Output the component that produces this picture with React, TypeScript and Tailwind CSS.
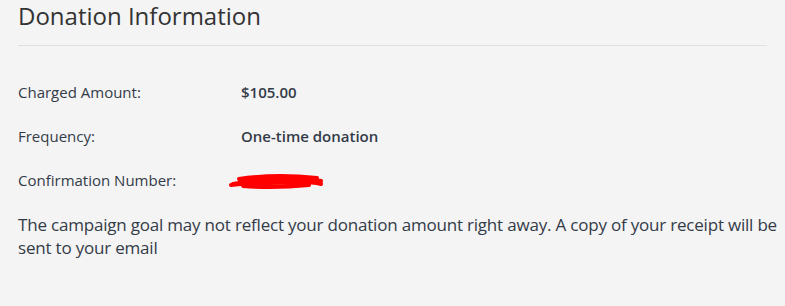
export default function App() {
  return (
    <div className="min-h-[306px] w-full bg-[#f4f4f4] pl-[18px] pr-[2px] font-['Open_Sans',sans-serif] text-[#333b48]">
      <h2 className="pt-[1px] text-[24px] leading-[30px] font-normal text-[#333]">Donation Information</h2>
      <div className="mt-[14px] h-px w-[749px] bg-[#e0e0e0]" />

      <div className="mt-[36px] flex flex-col gap-[24px] text-[15px] leading-[20px]">
        <div className="flex">
          <span className="w-[223px]">Charged Amount:</span>
          <span className="font-semibold">$105.00</span>
        </div>
        <div className="flex">
          <span className="w-[223px]">Frequency:</span>
          <span className="font-semibold">One-time donation</span>
        </div>
        <div className="flex h-[20px] items-center">
          <span className="w-[211px]">Confirmation Number:</span>
          <svg width="96" height="22" viewBox="0 0 96 22">
            <path
              d="M4 15 C20 11 40 10 60 9 C72 9 84 10 92 12 M2 16 C22 14 46 13 70 13 C80 13 88 14 92 15 M10 10 C30 7 60 6 88 9 M14 17 C40 19 60 18 80 16"
              stroke="#ff0000"
              strokeWidth="4"
              strokeLinecap="round"
              fill="none"
            />
            <path d="M20 11 C40 9 60 9 80 11 M26 14 C44 13 60 13 76 14" stroke="#ff0000" strokeWidth="5" fill="none" strokeLinecap="round" />
          </svg>
        </div>
      </div>

      <p className="mt-[23px] text-[17px] leading-[23px] tracking-[-0.2px]">
        The campaign goal may not reflect your donation amount right away. A copy of your receipt will be sent to your email
      </p>
    </div>
  );
}
